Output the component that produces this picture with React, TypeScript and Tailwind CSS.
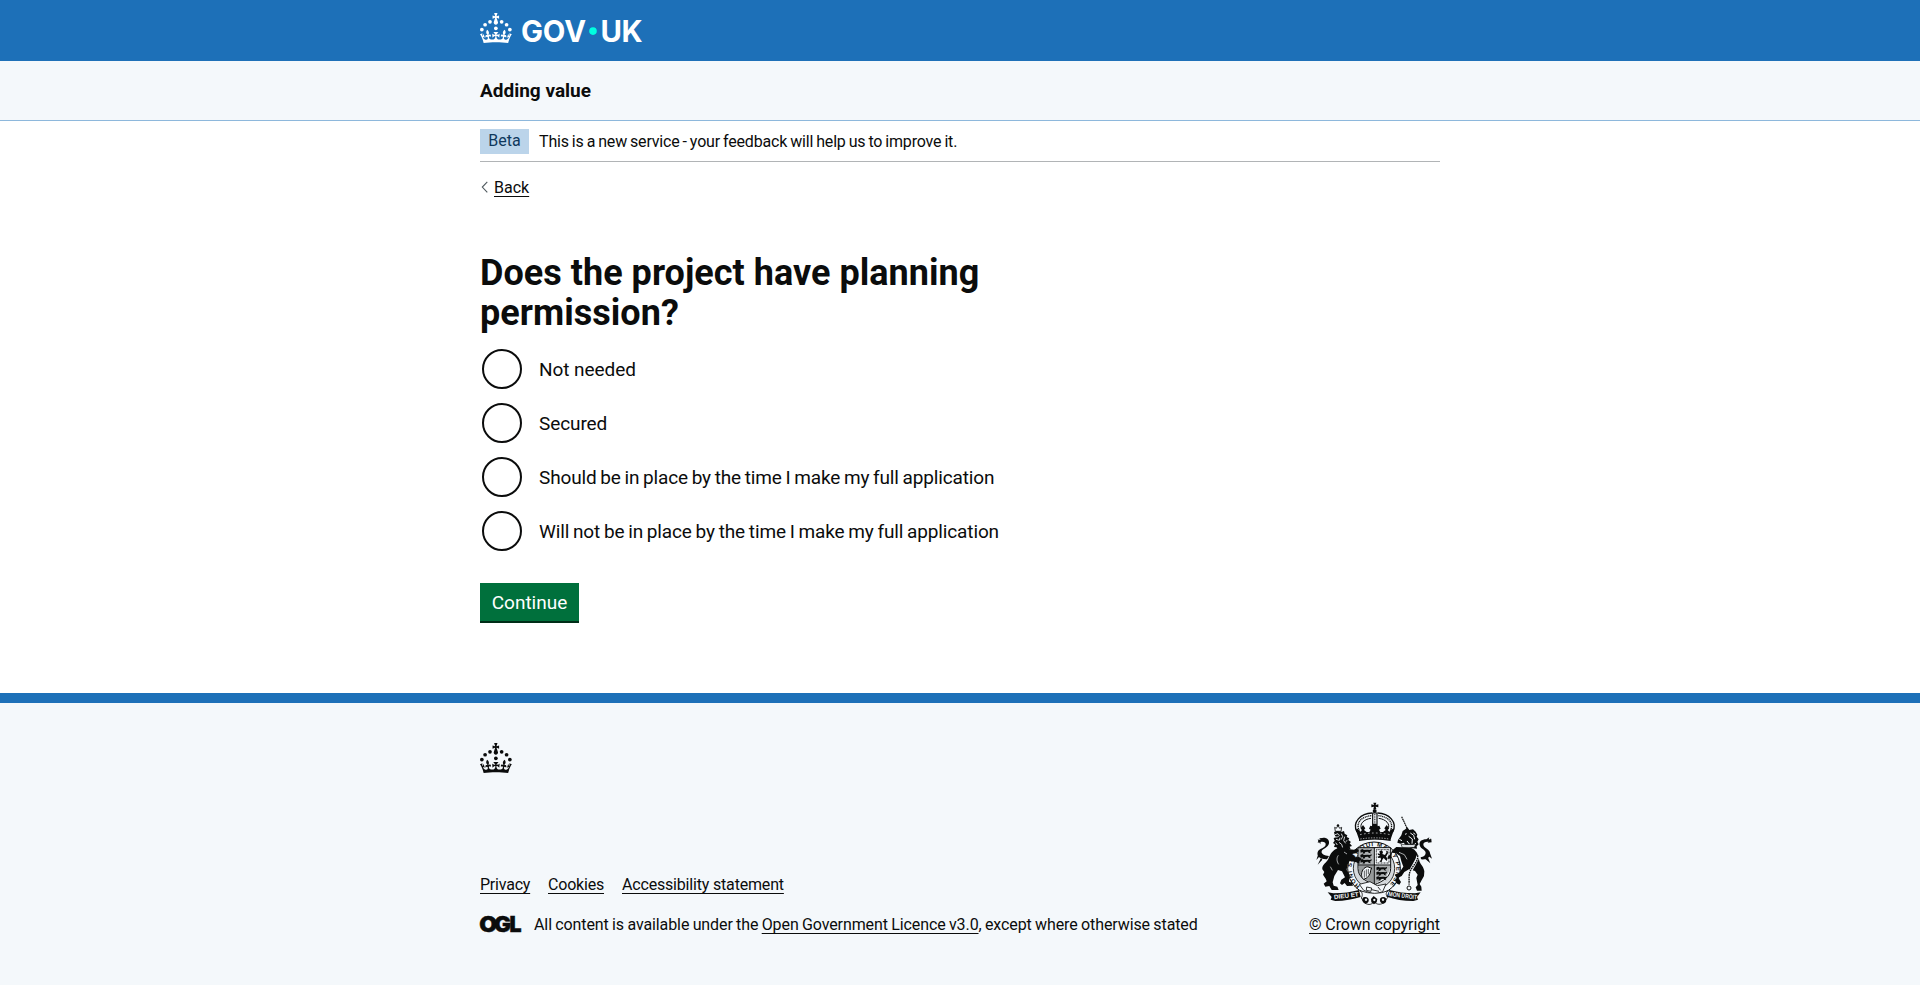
import type { ReactNode } from "react";

const OPTIONS = [
  { label: "Not needed", spacing: "tracking-[-0.05px]" },
  { label: "Secured", spacing: "tracking-[-0.1px]" },
  {
    label: "Should be in place by the time I make my full application",
    spacing: "tracking-[-0.14px] [word-spacing:-0.85px]",
  },
  {
    label: "Will not be in place by the time I make my full application",
    spacing: "tracking-[-0.13px] [word-spacing:-0.8px]",
  },
];

const CROWN_PATH =
  "M33.1,9.8c.2-.1.3-.3.5-.5l4.6,2.4v-6.8l-4.6,1.5c-.1-.2-.3-.3-.5-.5l1.9-5.9h-6.7l1.9,5.9c-.2.1-.3.3-.5.5l-4.6-1.5v6.8l4.6-2.4c.1.2.3.3.5.5l-2.6,8c-.9,2.8,1.2,5.7,4.1,5.7h0c3,0,5.1-2.9,4.1-5.7l-2.6-8ZM37,37.9s-3.4,3.8-4.1,6.1c2.2,0,4.2-.5,6.4-2.8l-.7,8.5c-2-2.8-4.4-4.1-5.7-3.8.1,3.1.5,6.7,5.8,7.2,3.7.3,6.7-1.5,7-3.8.4-2.6-2-4.3-3.7-1.6-1.4-4.5,2.4-6.1,4.9-3.2-1.9-4.5-1.8-7.7,2.4-10.9,3,4,2.6,7.3-1.2,11.1,2.4-1.3,6.2,0,4,4.6-1.2-2.8-3.7-2.2-4.2.2-.3,1.7.7,3.7,3,4.2,1.9.3,4.7-.9,7-5.9-1.3,0-2.4.7-3.9,1.7l2.4-8c.6,2.3,1.4,3.7,2.2,4.5.6-1.6.5-2.8,0-5.3l5,1.8c-2.6,3.6-5.2,8.7-7.3,17.5-7.4-1.1-15.7-1.7-24.5-1.7h0c-8.8,0-17.1.6-24.5,1.7-2.1-8.9-4.7-13.9-7.3-17.5l5-1.8c-.5,2.5-.6,3.7,0,5.3.8-.8,1.6-2.3,2.2-4.5l2.4,8c-1.5-1-2.6-1.7-3.9-1.7,2.3,5,5.2,6.2,7,5.9,2.3-.4,3.3-2.4,3-4.2-.5-2.4-3-3.1-4.2-.2-2.2-4.6,1.6-6,4-4.6-3.7-3.7-4.2-7.1-1.2-11.1,4.2,3.2,4.3,6.4,2.4,10.9,2.5-2.8,6.3-1.3,4.9,3.2-1.8-2.7-4.1-1-3.7,1.6.3,2.3,3.3,4.1,7,3.8,5.4-.5,5.7-4.2,5.8-7.2-1.3-.2-3.7,1-5.7,3.8l-.7-8.5c2.2,2.3,4.2,2.7,6.4,2.8-.7-2.3-4.1-6.1-4.1-6.1h10.6Z";

const CROWN_DOTS = [
  [20, 17.6],
  [10.2, 23.5],
  [3.7, 33.2],
  [31.7, 30.6],
  [43.3, 17.6],
  [53.2, 23.5],
  [59.7, 33.2],
];

function Crown() {
  return (
    <svg viewBox="0 0 64 60" className="block h-[30px] w-8 shrink-0" fill="currentColor" aria-hidden="true">
      {CROWN_DOTS.map(([x, y]) => (
        <circle key={x} cx={x} cy={y} r="3.7" />
      ))}
      <path d={CROWN_PATH} />
    </svg>
  );
}

function Wordmark() {
  return (
    <svg viewBox="0 0 126 42" className="block h-[42px] w-[126px] overflow-visible" fill="currentColor">
      <g fontFamily="Inter, sans-serif" fontWeight="650" fontSize="29.3">
        <text x="1" y="34.6" textLength="65">
          GOV
        </text>
        <text x="80.6" y="34.6" textLength="42">
          UK
        </text>
      </g>
      <circle cx="73" cy="24.1" r="3.8" fill="#00ffe0" />
    </svg>
  );
}

function OglMark() {
  return (
    <svg viewBox="0 0 41 17" className="block h-[17px] w-[41px] shrink-0 overflow-visible" fill="currentColor">
      <g fontFamily="Inter, sans-serif" fontWeight="900" fontSize="21.6" stroke="currentColor" strokeWidth="0.5">
        <text x="-0.7" y="15.9" textLength="18" lengthAdjust="spacingAndGlyphs">O</text>
        <text x="14" y="15.9" textLength="17" lengthAdjust="spacingAndGlyphs">G</text>
        <text x="29.4" y="15.9" textLength="12" lengthAdjust="spacingAndGlyphs">L</text>
      </g>
    </svg>
  );
}

function PassantLions() {
  return (
    <g>
      {[0, 15, 30].map((dy) => (
        <path
          key={dy}
          transform={`translate(0 ${dy})`}
          d="M2 3l6-3 5 3 10-1 8 1 5-3-1 6-5 2 4 5-7-2-2-3-8 1-3 5-6-1 3-5-8 3z"
        />
      ))}
    </g>
  );
}

function RoyalArms() {
  return (
    <svg viewBox="51 36 351 312" className="block h-[104px] w-[117px]" fill="#0b0c0c" aria-hidden="true">
      <defs>
        <path id="garter" d="M183 288A67 67 0 1 1 267 288" />
      </defs>

      {/* Crown */}
      <path d="M223 38h9l-2 7 8-2v9l-8-2 2 7h-9l2-7-8 2v-9l8 2z" />
      <circle cx="227" cy="63" r="6" />
      <path d="M221 69h13v42h-13z" fill="#f4f8fb" stroke="#0b0c0c" strokeWidth="3.500" />
      <path d="M227.500 72v38" stroke="#0b0c0c" strokeWidth="3" strokeDasharray="3 2" />
      <g fill="none" stroke="#0b0c0c">
        <path d="M174 126C158 96 186 70 219 69M281 126c16-30-12-56-45-57" strokeWidth="4" />
        <path d="M181 122c-12-24 6-42 36-45M274 122c12-24-6-42-36-45" strokeWidth="4" strokeDasharray="3.500 2" />
        <path d="M188 118c-8-16 6-30 28-33M267 118c8-16-6-30-28-33" strokeWidth="3" />
      </g>
      <path d="M180 148l-10-29 6-3 8 9 5-5-4-5 7-10 7 10-4 5 8 6 8 0 4-7-5-3 4-9 6 2 2-8h11l2 8 6-2 4 9-5 3 4 7h8l8-6-4-5 7-10 7 10-4 5 5 5 8-9 6 3-10 29z" />
      <path d="M183 134q45-10 90 0" fill="none" stroke="#f4f8fb" strokeWidth="2" strokeDasharray="5 7" />
      <path d="M180 144q47-9 95 0v9q-48-9-95 0z" />
      <path d="M184 147q43-7 87 0" fill="none" stroke="#f4f8fb" strokeWidth="2" strokeDasharray="4 4" />

      {/* Garter */}
      <circle cx="225" cy="235" r="79" fill="#f4f8fb" stroke="#0b0c0c" strokeWidth="3" />
      <circle cx="225" cy="235" r="62" fill="#d5d9dc" stroke="#0b0c0c" strokeWidth="2.500" />
      <text fontFamily="Liberation Sans, sans-serif" fontWeight="700" fontSize="18">
        <textPath href="#garter" textLength="322">HONI SOIT QUI MAL Y PENSE</textPath>
      </text>

      {/* Quartered shield */}
      <path d="M177 173h98v62c0 25-22 39-49 49-27-10-49-24-49-49z" fill="#f4f8fb" stroke="#0b0c0c" strokeWidth="3" />
      <path d="M226 173v111M177 225h98" stroke="#0b0c0c" strokeWidth="3" />
      <g transform="translate(182 177)"><PassantLions /></g>
      <g transform="translate(230 230) scale(.95)"><PassantLions /></g>
      <path d="M178 174h47v50h-47zM227 226h47q0 34-47 56z" opacity=".3" />
      <path d="M232 179h38v40h-38z" fill="none" stroke="#0b0c0c" strokeWidth="2.500" strokeDasharray="3 1.500" />
      <path d="M241 184l7-3 4 5-2 6 8 3 5-9-3-4 6 1 1 7-6 10 4 5-1 8-5-4-5-5-4 5-2 7-7-1 5-6-1-6-7 1-3-4 8-3-6-3-1-4 7 2z" />
      <path d="M179 226h46v55c-27-10-46-23-46-45z" opacity=".4" />
      <path d="M189 262c-4-13 2-27 13-31 7-3 9 4 16 3l-3 7c-1 14-9 24-22 27z" fill="#f4f8fb" stroke="#0b0c0c" strokeWidth="3" />
      <path d="M196 242v21M202 238v22M208 237v16" stroke="#0b0c0c" strokeWidth="2" />

      {/* Lion */}
      <path d="M107 112l5 3 5-9 5 9 6-3-2 12h-17z" fill="#f4f8fb" stroke="#0b0c0c" strokeWidth="2.500" />
      <circle cx="117" cy="106" r="3.500" />
      <path d="M105 126l9-3 15 2 6-2 2 8 8 5-2 5 8 4-3 5 8 6-4 4 7 8-7 2 3 8-9-2-2 7-8-5-7 4-5-6-8 3-3-7-8-1 3-8-6-4 5-7-3-7 6-4-3-7z" />
      <g stroke="#f4f8fb" strokeWidth="2.500" fill="none">
        <path d="M108 134l9-3 4 5-5 5-8 0M111 148l10 3 2-8M127 131l4 9-5 9M137 140l-3 12 6 8M120 157l8 6 3 10M145 152l-5 2M110 158l5 7" />
      </g>
      <path d="M112 176C97 184 92 196 88 207C83 218 68 224 70 238L76 246L72 254L80 266L83 274L74 281L79 290L91 288L98 300L119 300L115 290L104 287L101 277L106 258L117 240L129 244L138 262L127 269L123 280L129 285L137 279L144 288L162 287L159 278L150 275L152 254L143 240L145 225L152 212L172 217L181 222L182 213L189 207L180 201L170 202L158 192L171 190L180 183L174 175L165 179L152 178L143 171Z" />
      <path d="M84 208c-23 1-33-11-27-24 5-10 21-9 23-20 1-8-8-10-15-8l-9 2 3-8 6-2-5-3 10-1c10-3 22 4 20 16-2 14-20 15-22 24-2 8 8 13 22 14z" />
      <path d="M64 163l-8-15 9 4M58 192l-6 18 10-11M66 204l-10 20 14-15" />
      <path d="M118 196c-6 8-5 18 1 27M94 230l6 11M135 186l9 6" fill="none" stroke="#f4f8fb" strokeWidth="2" />

      {/* Unicorn */}
      <path d="M308 80l18 39" stroke="#0b0c0c" strokeWidth="3.500" strokeDasharray="5 1.500" />
      <path d="M325 112l6 8 11-2 8 7 5 9-2 6 6 8-4 7 4 8-6 6 1 7-13-1-18-6-9-11-9 3-10-3 2-8 10-14 4-13 8-5z" />
      <path d="M334 129l10 7 3 12M329 139l11 8-1 14M318 133l5-2M301 148l8 4M324 153l8 10M349 133l-6-4M351 160l-10 7" fill="none" stroke="#f4f8fb" strokeWidth="3" />
      <path d="M306 164h44l-4 8h-36z" fill="#f4f8fb" stroke="#0b0c0c" strokeWidth="2" />
      <path d="M281 180L292 171L310 172L336 173C352 180 358 193 360 208C361 222 374 228 376 244L375 258L367 272L362 282L367 290L368 302L354 302L350 292L356 285L352 264L356 254L348 243L330 238L316 246L308 258L298 263L306 276L301 284L292 280L288 270L293 264L287 254L300 249L313 230L307 214L303 198L291 190L279 188L276 205L266 207L266 200L273 194Z" />
      <path d="M366 208c20 2 31-9 26-23-4-10-18-11-19-21 0-8 9-10 19-8l6-7-9-1 2-6-9 6c-14 0-23 7-20 18 3 12 18 13 18 23 0 7-7 12-15 13z" />
      <path d="M386 158l10-13 2 12M392 187l7 19-12-9M386 200l8 20-15-13" />
      <g fill="none" stroke="#f4f8fb">
        <path d="M357 197c-3 20-17 30-22 48" strokeWidth="9" />
        <path d="M300 187l16 7 8 14" strokeWidth="2" />
      </g>
      <path d="M356 196c2 22-18 32-24 52-3 11-1 22-2 36" fill="none" stroke="#0b0c0c" strokeWidth="4" strokeDasharray="5 2" />
      <circle cx="330" cy="294" r="6" fill="#f4f8fb" stroke="#0b0c0c" strokeWidth="3" />

      {/* Buckle, ribbons and compartment */}
      <path d="M181 283l32-8 22 12 26-5-10 23-24 8-33-12z" fill="#f4f8fb" stroke="#0b0c0c" strokeWidth="2.500" />
      <path d="M203 291l15 3-2 10-14-3zM218 299l22 5M237 291l8 10" fill="none" stroke="#0b0c0c" strokeWidth="2.500" />
      <path d="M183 302c7 4 9 13 4 22l10 15c14 8 21 4 28-4 9 10 20 10 31 2l10-15c-7-8-5-16 2-20q-40 16-85 0" fill="#f4f8fb" stroke="#0b0c0c" strokeWidth="2.500" />
      <path d="M190 333q-2-14 11-12 12 4 7 15-9 12-18-3M216 327l8-9 11 9-2 10-8 6-8-6zM244 336q-5-13 8-15 13 0 9 15-9 10-17 0" />
      <circle cx="201" cy="329" r="3.500" fill="#f4f8fb" />
      <circle cx="226" cy="330" r="3.500" fill="#f4f8fb" />
      <circle cx="252" cy="329" r="3.500" fill="#f4f8fb" />
      <path d="M86 307l17 3c30 0 55-4 77-10l5 21c-22 7-48 12-76 12l-14-4 3-8z" />
      <path d="M365 307l-17 3c-30 0-55-4-77-10l-8 20c25 8 50 13 80 13l14-4-3-8z" />
      <g fill="#f4f8fb" fontFamily="Liberation Sans, sans-serif" fontWeight="700" fontSize="19">
        <text transform="translate(106 328) rotate(-7)" textLength="74" lengthAdjust="spacingAndGlyphs">DIEU ET</text>
        <text transform="translate(268 318) rotate(7)" textLength="86" lengthAdjust="spacingAndGlyphs">MON DROIT</text>
      </g>
    </svg>
  );
}

function Container({ children, className = "" }: { children: ReactNode; className?: string }) {
  return <div className={`mx-auto w-[960px] ${className}`}>{children}</div>;
}

function TextLink({ children, className = "" }: { children: ReactNode; className?: string }) {
  return (
    <a href="#" className={`underline decoration-1 underline-offset-[3px] ${className}`}>
      {children}
    </a>
  );
}

export default function App() {
  return (
    <div className="flex min-h-screen flex-col bg-white font-['Roboto',sans-serif] text-base leading-5 text-[#0b0c0c]">
      <header>
        <div className="h-[61px] bg-[#1d70b8] text-white">
          <Container className="flex items-start gap-2 pt-[7px]">
            <div className="pt-[6px]">
              <Crown />
            </div>
            <Wordmark />
          </Container>
        </div>
        <div className="h-[60px] border-b border-[#8eb8dc] bg-[#f4f8fb]">
          <Container className="pt-[17px] text-[19px] leading-[25px] font-bold">Adding value</Container>
        </div>
      </header>

      <Container>
        <div className="flex h-[41px] items-center gap-[10px] border-b border-[#b1b4b6]">
          <strong className="flex h-[25px] w-[49px] items-center justify-center bg-[#bbd4ea] font-normal text-[#0f385c]">
            Beta
          </strong>
          <span className="pt-px tracking-[-0.17px] [word-spacing:-0.8px]">
            This is a new service - your feedback will help us to improve it.
          </span>
        </div>
        <div className="mt-4 flex h-5 items-center">
          <svg viewBox="0 0 14 20" className="h-5 w-[14px]" fill="none" stroke="#505a5f" strokeWidth="1.1">
            <path d="M7.300 3.800L2.300 9.100l5 5.300" />
          </svg>
          <TextLink>Back</TextLink>
        </div>

        <main className="pt-[55px]">
          <h1 className="w-[630px] pr-24 text-4xl leading-10 font-bold tracking-[0.03px]">
            Does the project have planning permission?
          </h1>
          <div className="mt-[14px] flex flex-col gap-[10px]">
            {OPTIONS.map((option) => (
              <label key={option.label} className="flex h-11 items-center gap-[17px] pl-[2px] text-[19px] leading-[25px]">
                <input
                  type="radio"
                  name="planning"
                  className="size-10 shrink-0 appearance-none rounded-full border-2 border-[#0b0c0c]"
                />
                <span className={option.spacing}>{option.label}</span>
              </label>
            ))}
          </div>
          <button
            type="button"
            className="mt-[30px] flex h-[38px] w-[99px] items-center justify-center bg-[#00703c] text-[19px] leading-[19px] text-white shadow-[0_2px_0_#002d18]"
          >
            Continue
          </button>
        </main>
      </Container>

      <footer className="mt-[72px] flex-1 border-t-[10px] border-[#1d70b8] bg-[#f4f8fb] pt-10">
        <Container>
          <Crown />
          <div className="mt-[29px] flex items-end justify-between">
            <div>
              <nav className="flex gap-[18px]">
                <TextLink className="w-[50px] tracking-[-0.22px]">Privacy</TextLink>
                <TextLink className="w-[56px] tracking-[-0.2px]">Cookies</TextLink>
                <TextLink className="tracking-[-0.18px]">Accessibility statement</TextLink>
              </nav>
              <div className="mt-5 flex items-center gap-[13px]">
                <div className="pb-[2px]">
                  <OglMark />
                </div>
                <span className="tracking-[-0.1px] [word-spacing:-0.5px]">
                  All content is available under the <TextLink>Open Government Licence v3.0</TextLink>, except where
                  otherwise stated
                </span>
              </div>
            </div>
            <div className="flex w-[131px] flex-col items-center">
              <RoyalArms />
              <TextLink className="mt-[9px] tracking-[-0.09px] whitespace-nowrap">© Crown copyright</TextLink>
            </div>
          </div>
        </Container>
      </footer>
    </div>
  );
}
